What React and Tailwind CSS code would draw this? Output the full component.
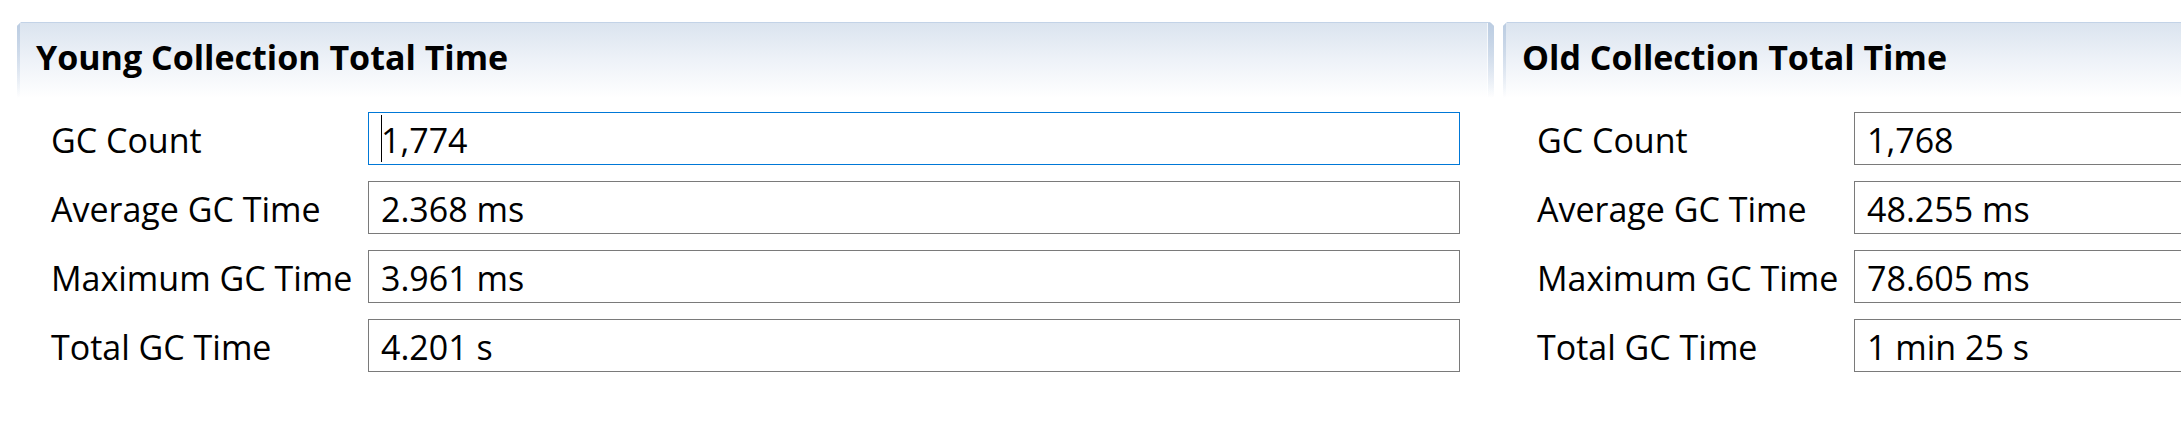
import React from 'react';

const young = [
  { label: 'GC Count', value: '1,774', focused: true },
  { label: 'Average GC Time', value: '2.368 ms' },
  { label: 'Maximum GC Time', value: '3.961 ms' },
  { label: 'Total GC Time', value: '4.201 s' },
];

const old = [
  { label: 'GC Count', value: '1,768' },
  { label: 'Average GC Time', value: '48.255 ms' },
  { label: 'Maximum GC Time', value: '78.605 ms' },
  { label: 'Total GC Time', value: '1 min 25 s' },
];

function Field({ label, value, focused }) {
  return (
    <div className="flex items-center h-[53px]">
      <div className="w-[351px] shrink-0 pl-[34px] pt-[4px] text-black whitespace-nowrap">{label}</div>
      <div
        className={
          focused
            ? 'w-[1092px] shrink-0 h-[53px] border border-[#0078d7] flex items-center pl-[12px] bg-white'
            : 'w-[1092px] shrink-0 h-[53px] border border-[#7a7a7a] flex items-center pl-[12px] bg-white'
        }
      >
        {focused && <div className="w-[1px] h-[47px] bg-black -mr-[1px]" />}
        <span className="pt-[4px] whitespace-nowrap">{value}</span>
      </div>
    </div>
  );
}

function Panel({ title, rows }) {
  return (
    <div className="w-[1477px] shrink-0">
      <div className="h-[76px] flex border-t border-[#c3d3e7] bg-gradient-to-b from-[#dbe4ef] via-[#eef2f8] to-white [clip-path:polygon(4px_0,calc(100%-4px)_0,100%_4px,100%_100%,0_100%,0_4px)]">
        <div className="w-[3px] bg-gradient-to-b from-[#bccde2] to-white/0" />
        <div className="flex-1 pl-[16px] pt-[11px]">
          <h2 className="text-[34px] leading-[46px] font-bold text-black whitespace-nowrap">{title}</h2>
        </div>
        <div className="w-[1px] bg-white/70" />
        <div className="w-[6px] bg-gradient-to-b from-[#bccde2] to-white/0" />
      </div>
      <div className="pt-[14px] flex flex-col gap-[16px]">
        {rows.map((r) => (
          <Field key={r.label} {...r} />
        ))}
      </div>
    </div>
  );
}

export default function App() {
  return (
    <div className="w-[2181px] h-[444px] overflow-hidden bg-white font-['Open_Sans',sans-serif] text-[34px] leading-normal">
      <div className="flex gap-[9px] pl-[17px] pt-[22px]">
        <Panel title="Young Collection Total Time" rows={young} />
        <Panel title="Old Collection Total Time" rows={old} />
      </div>
    </div>
  );
}
